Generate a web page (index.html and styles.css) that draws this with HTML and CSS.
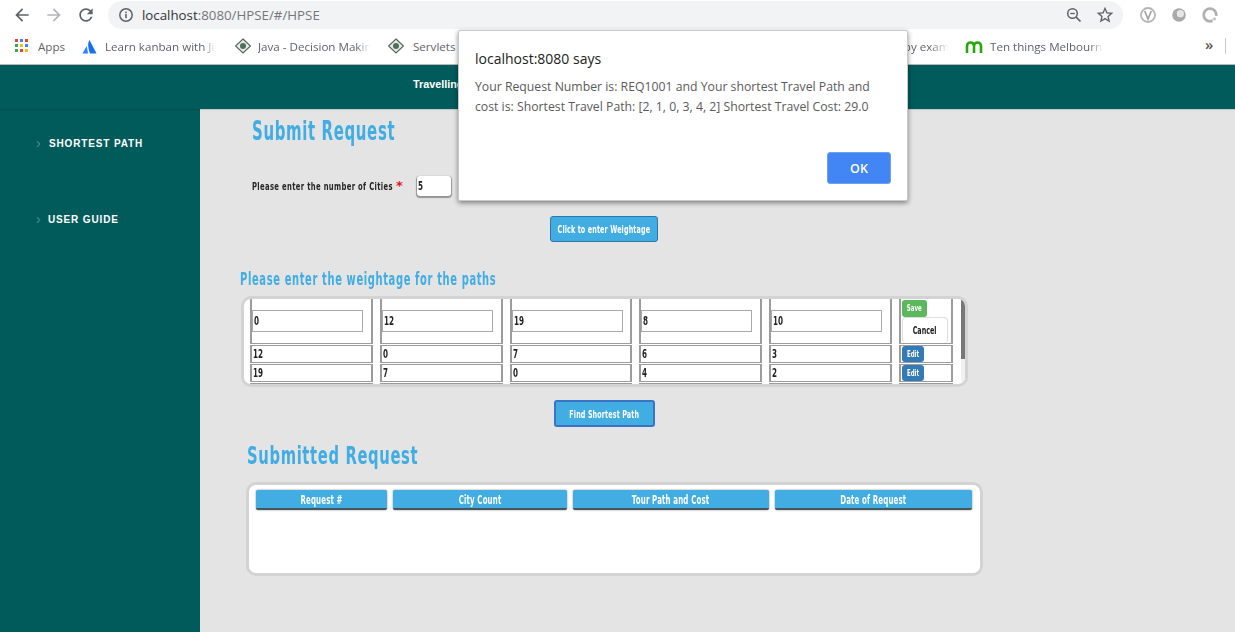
FILE: index.html
```html
<!DOCTYPE html>
<html lang="en">
<head>
<meta charset="utf-8">
<title>HPSE</title>
<link rel="stylesheet" href="styles.css">
</head>
<body>
<div class="toolbar">
  <span class="nav"><svg viewBox="0 0 24 24" width="20" height="20"><path fill="#5f6368" d="M20 11H7.83l5.59-5.59L12 4l-8 8 8 8 1.41-1.41L7.83 13H20v-2z"/></svg></span>
  <span class="nav"><svg viewBox="0 0 24 24" width="20" height="20"><path fill="#b4b6b9" d="M12 4l-1.41 1.41L16.17 11H4v2h12.17l-5.58 5.59L12 20l8-8z"/></svg></span>
  <span class="nav"><svg viewBox="0 0 24 24" width="20" height="20"><path fill="#5f6368" d="M17.65 6.35C16.2 4.9 14.21 4 12 4c-4.42 0-7.99 3.58-7.99 8s3.57 8 7.99 8c3.73 0 6.84-2.55 7.73-6h-2.08c-.82 2.33-3.04 4-5.65 4-3.31 0-6-2.69-6-6s2.69-6 6-6c1.66 0 3.14.69 4.22 1.78L13 11h7V4l-2.35 2.35z"/></svg></span>
  <div class="omnibox">
    <svg class="info" viewBox="0 0 16 16" width="16" height="16"><circle cx="8" cy="8" r="6.2" fill="none" stroke="#5f6368" stroke-width="1.5"/><rect x="7.2" y="7" width="1.6" height="4.2" fill="#5f6368"/><rect x="7.2" y="4.6" width="1.6" height="1.6" fill="#5f6368"/></svg>
    <span class="url"><span class="host">localhost</span>:8080/HPSE/#/HPSE</span>
    <svg class="omni-icon" viewBox="0 0 18 18" width="18" height="18"><circle cx="7.5" cy="7.5" r="4.8" fill="none" stroke="#5f6368" stroke-width="1.5"/><path d="M11 11l4.5 4.5" stroke="#5f6368" stroke-width="1.7"/><path d="M5.2 7.5h4.6" stroke="#5f6368" stroke-width="1.3"/></svg>
    <svg class="omni-icon star" viewBox="0 0 24 24" width="20" height="20"><path fill="#5f6368" d="M22 9.24l-7.19-.62L12 2 9.19 8.63 2 9.24l5.46 4.73L5.82 21 12 17.27 18.18 21l-1.63-7.03L22 9.24zM12 15.4l-3.76 2.27 1-4.28-3.32-2.88 4.38-.38L12 6.1l1.71 4.04 4.38.38-3.32 2.88 1 4.28L12 15.4z"/></svg>
  </div>
  <span class="ext first"><svg viewBox="0 0 20 20" width="18" height="18"><circle cx="10" cy="10" r="7.8" fill="none" stroke="#b5b5b5" stroke-width="2"/><path d="M6.3 5.5L10 14.5 13.7 5.5" fill="none" stroke="#a0a0a0" stroke-width="1.8"/></svg></span>
  <span class="ext"><svg viewBox="0 0 20 20" width="18" height="18"><circle cx="10" cy="10" r="7.5" fill="#a9a9a9"/><circle cx="11.5" cy="8.5" r="4" fill="#e6e6e6"/></svg></span>
  <span class="ext"><svg viewBox="0 0 20 20" width="18" height="18"><circle cx="10" cy="10" r="7" fill="none" stroke="#b0b0b0" stroke-width="3"/><rect x="13" y="11" width="6" height="7" fill="#fff"/><circle cx="15" cy="14.5" r="1.6" fill="#bdbdbd"/></svg></span>
</div>

<div class="bookmarks">
  <a class="mark mark-apps"><svg viewBox="0 0 14 14" width="14" height="14"><rect x="0" y="0" width="3" height="3" fill="#ea4335"/><rect x="5" y="0" width="3" height="3" fill="#4285f4"/><rect x="10" y="0" width="3" height="3" fill="#ea4335"/><rect x="0" y="5" width="3" height="3" fill="#34a853"/><rect x="5" y="5" width="3" height="3" fill="#fbbc05"/><rect x="10" y="5" width="3" height="3" fill="#4285f4"/><rect x="0" y="10" width="3" height="3" fill="#34a853"/><rect x="5" y="10" width="3" height="3" fill="#ea4335"/><rect x="10" y="10" width="3" height="3" fill="#fbbc05"/></svg><span class="mark-text">Apps</span></a>
  <a class="mark mark-kanban"><svg viewBox="0 0 16 16" width="15" height="15"><path d="M5 7.5L0.5 15.5H6.5Z" fill="#2684ff"/><path d="M8 1C6 4.5 6 7.5 8.5 15.5H15.5Z" fill="#1a6ff0"/></svg><span class="mark-text fade">Learn kanban with Jira</span></a>
  <a class="mark mark-java"><svg viewBox="0 0 16 16" width="16" height="16"><path d="M8 1L15.5 8 8 15 .5 8z" fill="#e8ece8" stroke="#55625a" stroke-width="1.2"/><circle cx="8" cy="8" r="3" fill="#4f6f58"/></svg><span class="mark-text fade">Java - Decision Making</span></a>
  <a class="mark mark-servlets"><svg viewBox="0 0 16 16" width="16" height="16"><path d="M8 1L15.5 8 8 15 .5 8z" fill="#e8ece8" stroke="#55625a" stroke-width="1.2"/><circle cx="8" cy="8" r="3" fill="#4f6f58"/></svg><span class="mark-text">Servlets - Tutorial</span></a>
  <a class="mark mark-spring"><span class="mark-text fade">The Java Streams API by examples</span></a>
  <a class="mark mark-ten"><svg viewBox="0 0 18 14" width="18" height="14"><path d="M2 14V7a3.5 3.5 0 0 1 7 0v7M9 7a3.5 3.5 0 0 1 7 0v7" fill="none" stroke="#25a80b" stroke-width="2.6"/></svg><span class="mark-text fade">Ten things Melbourne</span></a>
  <span class="more">»</span>
  <span class="bar"></span>
</div>

<header class="banner">
  <span class="banner-title">Travelling Salesman Problem</span>
</header>

<div class="page">
  <nav class="sidebar">
    <a class="side-link side-first"><span class="chev">›</span><span>SHORTEST PATH</span></a>
    <a class="side-link side-second"><span class="chev">›</span><span>USER GUIDE</span></a>
  </nav>
  <main class="content">
    <h1 class="title title-submit">Submit Request</h1>
    <div class="city-row">
      <label class="city-label"><span class="label-text">Please enter the number of Cities</span><span class="req">*</span></label>
      <span class="city-input"><span class="sq-left">5</span></span>
    </div>
    <button class="btn btn-weight"><span class="sq">Click to enter Weightage</span></button>
    <h2 class="subtitle">Please enter the weightage for the paths</h2>
    <div class="grid-card">
      <table class="matrix">
        <tr class="edit-row">
          <td><span class="cell-input"><span class="sq-left">0</span></span></td>
          <td><span class="cell-input"><span class="sq-left">12</span></span></td>
          <td><span class="cell-input"><span class="sq-left">19</span></span></td>
          <td><span class="cell-input"><span class="sq-left">8</span></span></td>
          <td><span class="cell-input"><span class="sq-left">10</span></span></td>
          <td class="actions"><span class="mini save"><span class="sq">Save</span></span><span class="cancel"><span class="sq">Cancel</span></span></td>
        </tr>
        <tr><td><span class="sq-left">12</span></td><td><span class="sq-left">0</span></td><td><span class="sq-left">7</span></td><td><span class="sq-left">6</span></td><td><span class="sq-left">3</span></td><td class="actions"><span class="mini edit"><span class="sq">Edit</span></span></td></tr>
        <tr><td><span class="sq-left">19</span></td><td><span class="sq-left">7</span></td><td><span class="sq-left">0</span></td><td><span class="sq-left">4</span></td><td><span class="sq-left">2</span></td><td class="actions"><span class="mini edit"><span class="sq">Edit</span></span></td></tr>
        <tr><td><span class="sq-left">8</span></td><td><span class="sq-left">6</span></td><td><span class="sq-left">4</span></td><td><span class="sq-left">0</span></td><td><span class="sq-left">5</span></td><td class="actions"><span class="mini edit"><span class="sq">Edit</span></span></td></tr>
      </table>
      <div class="scrollbar"><div class="thumb"></div></div>
    </div>
    <button class="btn btn-find"><span class="sq">Find Shortest Path</span></button>
    <h1 class="title title-submitted">Submitted Request</h1>
    <div class="request-card">
      <div class="request-head">
        <span class="head-cell h1"><span class="sq">Request #</span></span>
        <span class="head-cell h2"><span class="sq">City Count</span></span>
        <span class="head-cell h3"><span class="sq">Tour Path and Cost</span></span>
        <span class="head-cell h4"><span class="sq">Date of Request</span></span>
      </div>
    </div>
  </main>
</div>

<div class="dialog" role="dialog">
  <div class="dialog-title">localhost:8080 says</div>
  <p class="dialog-text">Your Request Number is: REQ1001 and Your shortest Travel Path and cost is: Shortest Travel Path: [2, 1, 0, 3, 4, 2] Shortest Travel Cost: 29.0</p>
  <div class="dialog-actions"><button class="ok">OK</button></div>
</div>
</body>
</html>
```
FILE: styles.css
```css
* { box-sizing: border-box; }
html, body { margin: 0; padding: 0; height: 632px; overflow: hidden; }
body { background: #e4e4e4; font-family: "Open Sans", "Noto Sans", sans-serif; position: relative; }

.toolbar { height: 30px; display: flex; align-items: center; padding-left: 6px; background: #fff; }
.nav { width: 32px; display: flex; justify-content: center; }
.omnibox { width: 1015px; height: 28px; margin-left: 6px; border-radius: 14px; background: #f1f3f4; display: flex; align-items: center; padding-left: 10px; }
.info { flex: none; }
.url { margin-left: 8px; font-size: 13.3px; color: #73777b; flex: 1; }
.host { color: #2f3337; }
.omni-icon { flex: none; margin-right: 12px; }
.star { margin-right: 8px; }
.ext { width: 31px; display: flex; justify-content: center; }
.ext.first { margin-left: 9px; }

.bookmarks { height: 35px; display: flex; align-items: center; padding: 0 0 2px 15px; background: #fff; border-bottom: 1px solid #b9b9b9; font-size: 11.6px; color: #5f6368; }
.mark { display: flex; align-items: center; flex: none; overflow: hidden; }
.mark svg { flex: none; }
.mark-text { margin-left: 9px; white-space: nowrap; }
.fade { -webkit-mask-image: linear-gradient(to right, #000 88%, transparent); mask-image: linear-gradient(to right, #000 88%, transparent); overflow: hidden; }
.mark-apps { width: 67px; }
.mark-kanban { width: 153px; }
.mark-kanban .mark-text { margin-left: 8px; }
.mark-kanban .fade { width: 111px; }
.mark-java { width: 153px; }
.mark-java .mark-text { margin-left: 7px; }
.mark-java .fade { width: 112px; }
.mark-servlets { width: 400px; }
.mark-spring { width: 177px; }
.mark-spring .fade { margin-left: 0; width: 161px; }
.mark-ten { width: 240px; }
.mark-ten .mark-text { margin-left: 7px; }
.mark-ten .fade { width: 113px; }
.more { font-size: 15px; line-height: 1; font-weight: 600; color: #555; width: 20px; margin-top: -3px; }
.bar { width: 1px; height: 16px; background: #c8c8c8; }

.banner { height: 44px; background: #025b5b; display: flex; align-items: center; padding: 0 0 6px 413px; box-shadow: 0 1px 1px rgba(0,0,0,.12); position: relative; }
.banner-title { font: bold 10.8px "Liberation Sans", Arial, sans-serif; color: #fff; }

.page { display: flex; height: 523px; }
.sidebar { width: 200px; flex: none; background: #025b5b; color: #fff; font: bold 10px "Liberation Sans", Arial, sans-serif; letter-spacing: .85px; }
.side-link { display: flex; align-items: center; }
.side-first { margin-top: 27px; }
.side-second { margin-top: 62px; }
.chev { width: 13px; margin-left: 36px; font-size: 14px; font-weight: normal; line-height: 14px; color: #4f9090; letter-spacing: 0; }
.side-second .chev { width: 12px; }
.content { flex: 1; min-width: 0; display: flex; flex-direction: column; align-items: flex-start; }

.title, .subtitle, .city-label, .city-input, .btn, .matrix, .head-cell, .cancel, .mini {
  font-family: "DejaVu Sans", "Liberation Sans", sans-serif;
}
.sq { display: inline-block; transform: scaleX(.61); white-space: nowrap; }
.sq-left { display: inline-block; transform: scaleX(.6); transform-origin: left center; }

.title { margin: 0; font-size: 26px; line-height: 30px; font-weight: bold; color: #41ade2; letter-spacing: 1.1px; white-space: nowrap; transform: scaleX(.575); transform-origin: left center; }
.title-submit { margin: 7px 0 0 52px; }
.city-row { display: flex; align-items: center; margin: 29px 0 0 52px; height: 22px; }
.city-label { display: flex; align-items: center; font-size: 11px; font-weight: bold; color: #262626; letter-spacing: .55px; width: 165px; white-space: nowrap; }
.label-text { display: block; width: 144px; transform: scaleX(.62); transform-origin: left center; }
.req { color: #e8131b; font-size: 13px; line-height: 12px; }
.city-input { width: 34px; height: 20px; background: #fff; border-radius: 3px; box-shadow: 0 1px 1px 1px rgba(0,0,0,.35); font-size: 12px; font-weight: bold; padding-left: 1px; line-height: 20px; color: #222; }
.btn { display: flex; align-items: center; justify-content: center; color: #fff; background: #41ade2; border-radius: 3px; font-size: 10.5px; font-weight: bold; padding: 0; letter-spacing: .2px; white-space: nowrap; }
.btn-weight { width: 108px; height: 26px; margin: 19px 0 0 350px; border: 1px solid #2e77ad; }
.subtitle { margin: 27px 0 0 40px; font-size: 17px; line-height: 20px; color: #41ade2; letter-spacing: 1.1px; font-weight: bold; white-space: nowrap; transform: scaleX(.583); transform-origin: left center; }
.grid-card { flex: none; width: 727px; height: 91px; margin: 7px 0 0 41px; border: 3px solid #d3d3d3; border-radius: 10px; background: #fff; overflow: hidden; padding-left: 6px; position: relative; }
.matrix { border-collapse: separate; border-spacing: 7px 1px; table-layout: fixed; width: 717px; margin: -2px 0 0 -7px; font-size: 12px; font-weight: bold; color: #222; }
.matrix td { border: 1px solid #9c9c9c; border-width: 1px 2px; padding: 0 0 0 1px; height: 18px; line-height: 15px; overflow: hidden; }
.matrix .edit-row td { height: 46px; padding: 0; }
.matrix td.actions { width: 54px; vertical-align: top; padding-left: 1px; }
.cell-input { display: block; width: 111px; height: 22px; border: 1px solid #a9a9a9; line-height: 20px; padding-left: 1px; }
.mini { display: block; color: #fff; font-size: 9px; font-weight: bold; text-align: center; border-radius: 3px; line-height: 16px; height: 16px; }
.save { background: #5cb85c; width: 25px; height: 17px; margin-top: 1px; }
.edit { background: #337ab7; width: 22px; }
.cancel { display: block; width: 46px; height: 26px; border: 1px solid #ddd; border-bottom: 0; border-radius: 4px; font-size: 10.5px; line-height: 25px; text-align: center; color: #222; }
.scrollbar { position: absolute; top: 0; right: 0; width: 4px; height: 100%; background: #f1f1f1; }
.thumb { height: 60px; background: #777; }
.btn-find { width: 101px; height: 27px; margin: 13px 0 0 354px; border: 2px solid #3b73c6; }
.title-submitted { margin: 14px 0 0 47px; font-size: 25px; transform: scaleX(.59); }
.request-card { flex: none; width: 737px; height: 94px; margin: 11px 0 0 46px; border: 3px solid #d3d3d3; border-radius: 10px; background: #fff; padding: 5px 0 0 7px; }
.request-head { display: flex; gap: 6px; }
.head-cell { display: block; height: 20px; background: #41ade2; color: #fff; font-size: 11.5px; font-weight: bold; letter-spacing: .25px; text-align: center; line-height: 20px; border-bottom: 2px solid #44575f; border-radius: 2px; box-shadow: 0 0 2px rgba(0,0,0,.5); }
.h1 { width: 131px; } .h2 { width: 174px; } .h3 { width: 196px; } .h4 { width: 197px; }

.dialog { position: absolute; left: 458px; top: 30px; width: 450px; height: 171px; background: #fff; border: 1px solid #c9c9c9; border-radius: 2px; box-shadow: 0 2px 5px rgba(0,0,0,.45); padding: 17px 16px 0; }
.dialog-title { font-size: 14px; line-height: 22px; color: #222; }
.dialog-text { margin: 7px 0 0; font-size: 12.25px; line-height: 20px; color: #5a5a5a; height: 58px; }
.dialog-actions { display: flex; justify-content: flex-end; margin-top: 17px; }
.ok { width: 64px; height: 32px; background: #4285f4; color: #fff; border: 1px solid #6f9ff0; border-radius: 3px; font: 600 12.5px "Open Sans", sans-serif; }
```
